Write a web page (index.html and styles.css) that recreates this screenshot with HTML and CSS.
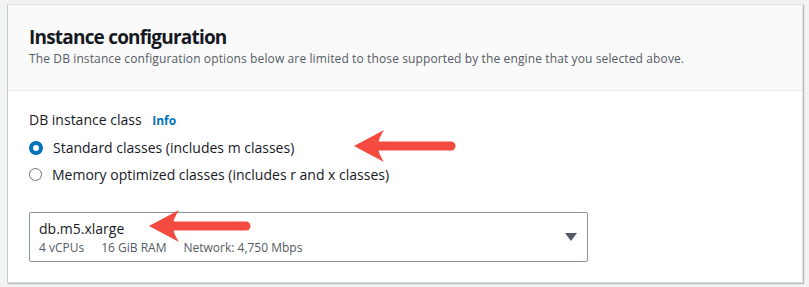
FILE: index.html
```html
<!doctype html>
<html lang="en">
<head>
    <meta charset="UTF-8">
    <title>Instance configuration</title>
    <link rel="stylesheet" href="styles.css">
</head>
<body>

<div class="card">
    <!-- Header -->
    <div class="card-header">
        <h2>Instance configuration</h2>
        <p class="desc">The DB instance configuration options below are limited to those supported by the engine that you selected above.</p>
    </div>

    <!-- Body -->
    <div class="card-body">
        <div class="label">DB instance class <a class="info" href="#">Info</a></div>
        <label class="radio first">
            <span class="dot checked"></span>
            Standard classes (includes m classes)
        </label>
        <label class="radio">
            <span class="dot"></span>
            Memory optimized classes (includes r and x classes)
        </label>

        <div class="select">
            <div class="select-text">
                <div class="select-value">db.m5.xlarge</div>
                <div class="select-meta">
                    <span>4 vCPUs</span>
                    <span>16 GiB RAM</span>
                    <span>Network: 4,750 Mbps</span>
                </div>
            </div>
            <span class="caret"></span>
        </div>
    </div>
</div>

<!-- Annotation arrows -->
<svg class="arrow arrow-1" width="104" height="34" viewBox="0 0 104 34">
    <line x1="24" y1="17" x2="98" y2="17" stroke="#f44a40" stroke-width="9" stroke-linecap="round"/>
    <path d="M1 17 L31 1 Q25 10 25 17 Q25 24 31 33 Z" fill="#f44a40"/>
</svg>
<svg class="arrow arrow-2" width="104" height="34" viewBox="0 0 104 34">
    <line x1="24" y1="17" x2="98" y2="17" stroke="#f44a40" stroke-width="9" stroke-linecap="round"/>
    <path d="M1 17 L31 1 Q25 10 25 17 Q25 24 31 33 Z" fill="#f44a40"/>
</svg>

</body>
</html>
```

FILE: styles.css
```css
body {
    margin: 0;
    padding: 4px 6px 5px 7px;
    background: #f2f3f3;
    font-family: "Open Sans", Arial, sans-serif;
    color: #16191f;
    position: relative;
}
.card {
    background: #fff;
    border: 1px solid #dfe3e3;
    border-left-color: #c6cccc;
    box-shadow: 1px 1px 1px rgba(0, 28, 36, 0.25);
}
.card-header {
    background: #fafafa;
    border-bottom: 1px solid #e4e8e8;
    padding: 19px 20px 0 21px;
    height: 66px;
}
h2 {
    margin: 0;
    font-size: 19px;
    font-weight: 700;
    line-height: 26px;
    letter-spacing: -0.8px;
}
.desc {
    margin: 1px 0 0;
    font-size: 12px;
    letter-spacing: 0.12px;
    color: #545b64;
    line-height: 16px;
}
.card-body {
    padding: 19px 20px 20px 21px;
}
.label {
    font-size: 14px;
    line-height: 20px;
}
.info {
    font-size: 12px;
    font-weight: 700;
    color: #0073bb;
    text-decoration: none;
    margin-left: 7px;
}
.radio {
    display: flex;
    align-items: center;
    gap: 10px;
    font-size: 14px;
    line-height: 27px;
}
.radio.first {
    margin-top: 3px;
}
.dot {
    width: 11px;
    height: 11px;
    border: 1.5px solid #687078;
    border-radius: 50%;
    flex-shrink: 0;
}
.dot.checked {
    border: 4px solid #0073bb;
    width: 6px;
    height: 6px;
}
.select {
    margin-top: 24px;
    width: 559px;
    height: 50px;
    border: 1px solid #8d969e;
    border-radius: 2px;
    display: flex;
    align-items: center;
    justify-content: space-between;
    padding: 0 10px 0 9px;
    box-sizing: border-box;
}
.select-text {
    align-self: flex-start;
    padding-top: 6px;
}
.select-value {
    font-size: 14px;
    line-height: 20px;
}
.select-meta {
    font-size: 12px;
    line-height: 18px;
    color: #545b64;
    display: flex;
    gap: 17px;
}
.caret {
    width: 0;
    height: 0;
    border-left: 6px solid transparent;
    border-right: 6px solid transparent;
    border-top: 8px solid #545b64;
}
.arrow {
    position: absolute;
}
.arrow-1 {
    left: 353px;
    top: 129px;
}
.arrow-2 {
    left: 148px;
    top: 209px;
}
```
